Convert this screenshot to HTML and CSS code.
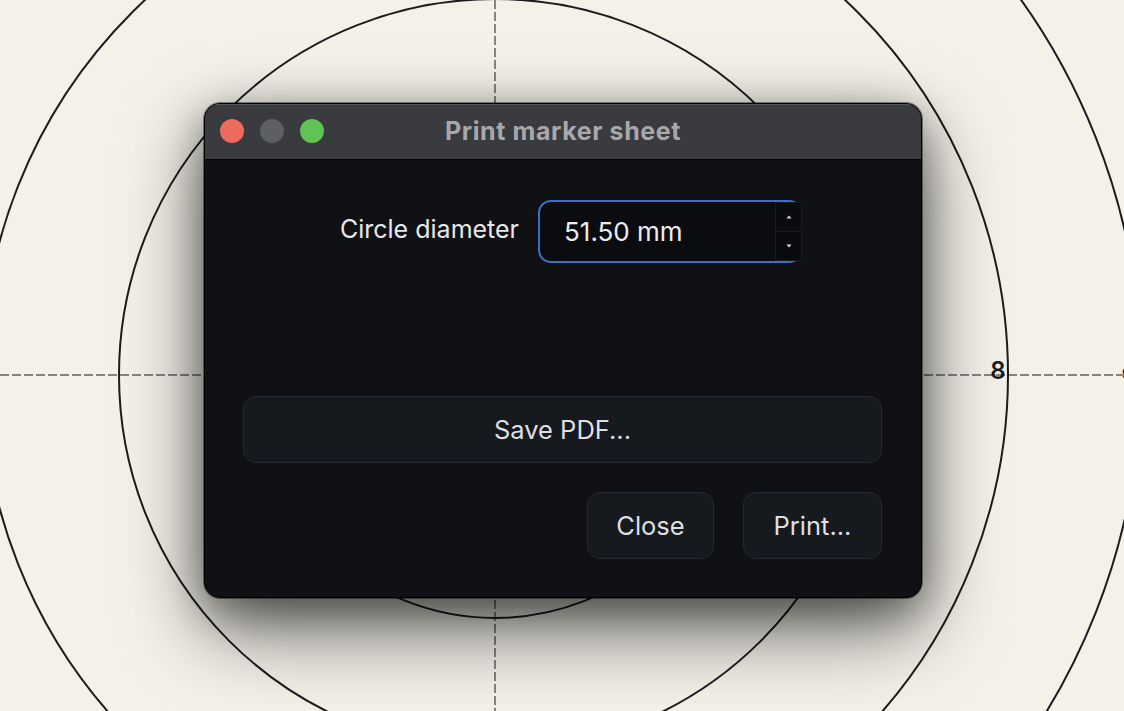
FILE: index.html
```html
<!DOCTYPE html>
<html lang="en">
<head>
<meta charset="utf-8">
<title>Print marker sheet</title>
<link rel="stylesheet" href="styles.css">
</head>
<body>
<div class="desk">
  <svg class="chart" width="1124" height="711" viewBox="0 0 1124 711" xmlns="http://www.w3.org/2000/svg">
    <g class="axes">
      <line x1="0" y1="375" x2="1124" y2="375"/>
      <line x1="495" y1="0" x2="495" y2="711"/>
    </g>
    <g class="rings">
      <circle cx="495" cy="375" r="243"/>
      <circle cx="495" cy="375" r="376"/>
      <circle cx="495" cy="375" r="513"/>
      <circle cx="495" cy="375" r="646"/>
    </g>
    <g class="ring-labels">
      <text x="998" y="379">8</text>
      <text x="1122" y="379" class="edge-label">9</text>
    </g>
  </svg>

  <div class="window">
    <div class="titlebar">
      <div class="lights">
        <span class="light light-close"></span>
        <span class="light light-min"></span>
        <span class="light light-max"></span>
      </div>
      <div class="title">Print marker sheet</div>
    </div>
    <div class="content">
      <div class="field-row">
        <label class="field-label">Circle diameter</label>
        <div class="spin">
          <span class="spin-value">51.50 mm</span>
          <div class="stepper">
            <span class="step step-up"><svg width="6" height="4" viewBox="0 0 6 4"><path d="M3 0.5 L5.5 3.5 H0.5 Z"/></svg></span>
            <span class="step step-down"><svg width="6" height="4" viewBox="0 0 6 4"><path d="M3 3.5 L5.5 0.5 H0.5 Z"/></svg></span>
          </div>
        </div>
      </div>
      <button class="btn btn-wide">Save PDF...</button>
      <div class="actions">
        <button class="btn btn-close">Close</button>
        <button class="btn btn-print">Print...</button>
      </div>
    </div>
  </div>
</div>
</body>
</html>
```
FILE: styles.css
```css
html, body {
  margin: 0;
  padding: 0;
  background: #f4f1e9;
  overflow: hidden;
}

.desk {
  position: relative;
  width: 1124px;
  height: 711px;
  background: #f4f1e9;
  font-family: Inter, "Liberation Sans", sans-serif;
}

.chart {
  position: absolute;
  left: 0;
  top: 0;
  display: block;
}

.axes line {
  stroke: #848482;
  stroke-width: 2;
  stroke-dasharray: 9 3;
}

.rings circle {
  fill: none;
  stroke: #1d1d20;
  stroke-width: 2;
}

.ring-labels text {
  font-family: Inter, "Liberation Sans", sans-serif;
  font-size: 24px;
  font-weight: 600;
  fill: #1d1d20;
  text-anchor: middle;
}

.ring-labels .edge-label {
  text-anchor: start;
  font-size: 14px;
}

.window {
  position: absolute;
  left: 204px;
  top: 103px;
  width: 718px;
  height: 495px;
  box-sizing: border-box;
  border-radius: 16px;
  border: 1px solid #000;
  background: #101115;
  overflow: hidden;
  display: flex;
  flex-direction: column;
  box-shadow: 0 0 0 1px rgba(0,0,0,0.4), 0 30px 80px rgba(0,0,0,0.6), 0 12px 40px rgba(0,0,0,0.35);
}

.titlebar {
  position: relative;
  height: 55px;
  flex: none;
  background: #3a3b3f;
  border-bottom: 1px solid #050507;
  box-shadow: inset 0 1px 0 #55565a;
  display: flex;
  align-items: center;
  justify-content: center;
}

.lights {
  position: absolute;
  left: 15px;
  top: 15px;
  display: flex;
  gap: 16px;
}

.light {
  width: 24px;
  height: 24px;
  border-radius: 50%;
  display: block;
}
.light-close { background: #ed6a5e; }
.light-min { background: #5e5f63; }
.light-max { background: #5fc454; }

.title {
  color: #a7a8ac;
  font-size: 25px;
  font-weight: 700;
  letter-spacing: 0.6px;
  position: relative;
  top: -1px;
}

.content {
  flex: 1;
  display: flex;
  flex-direction: column;
  padding: 40px 39px 39px 38px;
}

.field-row {
  display: flex;
  align-items: center;
  justify-content: center;
  gap: 19px;
  padding-left: 17px;
}

.field-label {
  color: #e8e8ea;
  font-size: 25px;
  position: relative;
  top: -3px;
}

.spin {
  position: relative;
  width: 264px;
  height: 63px;
  box-sizing: border-box;
  border: 2px solid #3c6ed0;
  border-radius: 13px;
  background: #0b0c10;
  display: flex;
  align-items: center;
  padding-left: 24px;
}

.spin-value {
  color: #ececee;
  font-size: 26px;
}

.stepper {
  position: absolute;
  right: -2px;
  top: 0px;
  width: 27px;
  height: 59px;
  display: flex;
  flex-direction: column;
  background: #0a0b0e;
  border: 1px solid #1a1b1f;
  box-sizing: border-box;
}

.step {
  flex: 1;
  display: flex;
  align-items: center;
  justify-content: center;
}
.step + .step { border-top: 1px solid #1a1b1f; }
.step svg path { fill: #d8d8da; }

.btn {
  font-family: Inter, "Liberation Sans", sans-serif;
  font-size: 25.5px;
  color: #dedfe3;
  background: #161a1f;
  border: 1.5px solid #262a31;
  border-radius: 13px;
  height: 67px;
  box-sizing: border-box;
  padding: 0;
  cursor: default;
}

.btn-wide {
  margin-top: 133px;
  width: 100%;
}

.actions {
  margin-top: 29px;
  display: flex;
  justify-content: flex-end;
  gap: 29px;
}

.btn-close { width: 127px; }
.btn-print { width: 139px; }
```
